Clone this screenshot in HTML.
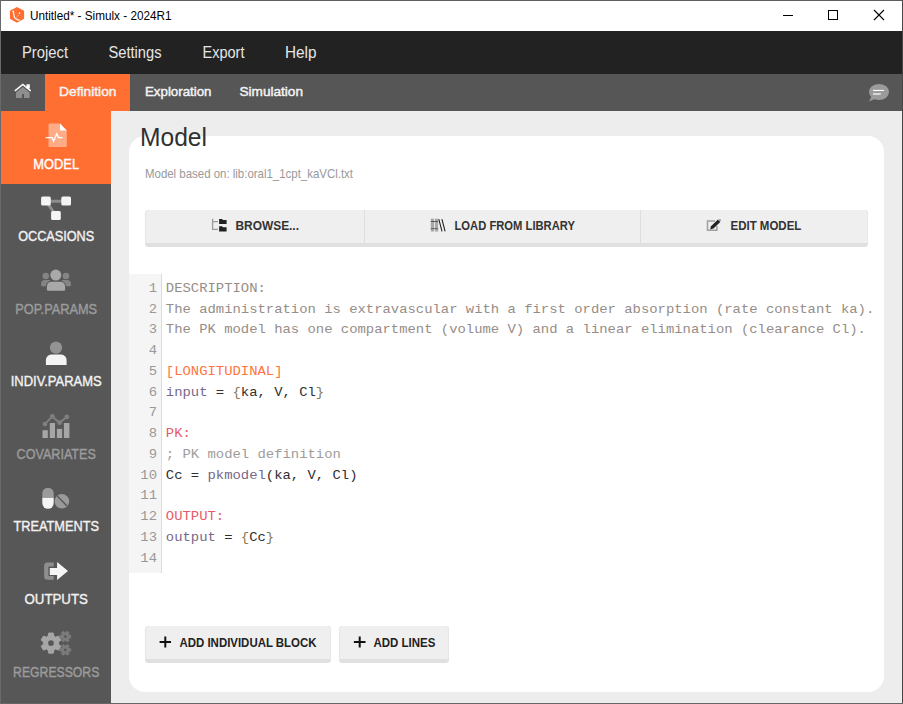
<!DOCTYPE html>
<html><head><meta charset="utf-8"><title>Simulx</title>
<style>
html,body{margin:0;padding:0;width:903px;height:704px;overflow:hidden;background:#5f5f5f;font-family:"Liberation Sans",sans-serif;}
.a{position:absolute;}
</style></head><body>
<div class="a" style="left:0;top:0;width:903px;height:1px;background:#5f5f5f;"></div>
<div class="a" style="left:0;top:0;width:1px;height:704px;background:#6a6a6a;"></div>
<div class="a" style="left:902px;top:0;width:1px;height:704px;background:#474747;"></div>
<div class="a" style="left:0;top:703px;width:903px;height:1px;background:#666;"></div>
<div class="a" style="left:1px;top:1px;width:901px;height:702px;background:#ededed;"></div>
<div class="a" style="left:1px;top:1px;width:901px;height:30px;background:#fff;"></div>
<div class="a" style="left:1px;top:31px;width:901px;height:43px;background:#222;"></div>
<div class="a" style="left:1px;top:74px;width:901px;height:37px;background:#565656;"></div>
<div class="a" style="left:45px;top:74px;width:85px;height:37px;background:#ff6f31;"></div>
<div class="a" style="left:1px;top:111px;width:110px;height:592px;background:#575757;"></div>
<div class="a" style="left:1px;top:111px;width:110px;height:72.5px;background:#ff6f31;"></div>
<div class="a" style="left:129px;top:136px;width:755px;height:556px;background:#fff;border-radius:16px;"></div>
<div class="a" style="left:129px;top:274px;width:32px;height:299px;background:#f5f5f5;border-right:1px solid #dcdcdc;"></div>
<div class="a" style="left:145px;top:210px;width:723px;height:37px;background:#e0e0e0;border-radius:3.5px;"></div>
<div class="a" style="left:145px;top:210px;width:723px;height:33px;background:#efefef;border-radius:3.5px 3.5px 0 0;box-shadow:inset 1px 0 0 #e6e6e6,inset -1px 0 0 #e6e6e6;"></div>
<div class="a" style="left:364px;top:210px;width:1px;height:33px;background:#dedede;"></div>
<div class="a" style="left:640px;top:210px;width:1px;height:33px;background:#dedede;"></div>
<div class="a" style="left:145px;top:626px;width:186px;height:37px;background:#e0e0e0;border-radius:3.5px;"></div>
<div class="a" style="left:145px;top:626px;width:186px;height:33px;background:#efefef;border-radius:3.5px 3.5px 0 0;box-shadow:inset 1px 0 0 #e6e6e6,inset -1px 0 0 #e6e6e6;"></div>
<div class="a" style="left:339px;top:626px;width:110px;height:37px;background:#e0e0e0;border-radius:3.5px;"></div>
<div class="a" style="left:339px;top:626px;width:110px;height:33px;background:#efefef;border-radius:3.5px 3.5px 0 0;box-shadow:inset 1px 0 0 #e6e6e6,inset -1px 0 0 #e6e6e6;"></div>
<svg class="a" style="left:0;top:0" width="903" height="704" viewBox="0 0 903 704">

<!-- title logo -->
<polygon points="16.9,7 24.1,10.8 24.1,18.8 16.9,22.8 9.9,18.8 9.9,10.8" fill="#ff6f31"/>
<path d="M12.3,11.8 L13.4,11.3 L14.2,16.8 Q15.5,19.8 19.8,20.3" stroke="#fff" stroke-width="1.1" fill="none"/>
<path d="M15.5,19 L20,13" stroke="#fff" stroke-width="0.7" stroke-dasharray="1,1" fill="none"/>
<circle cx="19.6" cy="13.1" r="0.8" fill="#fff"/>
<!-- window controls -->
<rect x="783" y="15" width="10" height="1" fill="#000"/>
<rect x="828.5" y="10.5" width="9" height="9" fill="none" stroke="#000" stroke-width="1"/>
<path d="M874,10 L884,20 M884,10 L874,20" stroke="#000" stroke-width="1.1"/>
<!-- home -->
<path d="M16,92.6 L22.8,86.9 L29.6,92.6 L29.6,98 L24,98 L24,93.9 L22,93.9 L22,98 L16,98 Z" fill="#8e8e8e"/>
<path d="M14.9,90.8 L22.8,84.5 L30.7,90.8" stroke="#fff" stroke-width="1.5" fill="none"/>
<rect x="26.5" y="84.3" width="3.3" height="4.2" fill="#fff"/>
<!-- chat bubble -->
<ellipse cx="879" cy="92" rx="10" ry="8" fill="#9b9b9b"/>
<path d="M871.5,96.5 L869,101.5 L876,98.5 Z" fill="#9b9b9b"/>
<rect x="873" y="89.9" width="11" height="1.1" fill="#fff"/>
<rect x="873" y="93.4" width="7.8" height="1.2" fill="#fff"/>
<!-- MODEL icon -->
<path d="M49.5,123.6 L60,123.6 L66.8,130.4 L66.8,146 Q66.8,147 65.8,147 L49.5,147 Q48.5,147 48.5,146 L48.5,124.6 Q48.5,123.6 49.5,123.6 Z" fill="#ffac86"/>
<path d="M60,123.6 L66.8,130.4 L60,130.4 Z" fill="#fff"/>
<path d="M45.6,137.6 L52.2,137.6 L53.6,141.2 L56.8,133.8 L58.6,137.6 L62.5,137.6" stroke="#fff" stroke-width="1.3" fill="none" stroke-linejoin="miter"/>
<!-- OCCASIONS icon -->
<path d="M46,201.2 L66,201.2 M46,201.2 L56,215.5" stroke="#8c8c8c" stroke-width="3" fill="none"/>
<rect x="41.1" y="196.4" width="9.7" height="9.2" rx="1.5" fill="#f4f4f4"/>
<rect x="61.3" y="196.4" width="9.7" height="9.2" rx="1.5" fill="#f4f4f4"/>
<rect x="51.1" y="211" width="9.7" height="8.9" rx="1.5" fill="#f4f4f4"/>
<!-- POP.PARAMS icon -->
<circle cx="45.8" cy="276" r="3.3" fill="#848484"/>
<circle cx="66" cy="276" r="3.3" fill="#848484"/>
<path d="M41,286 L41,284 Q41,280 45,280 L50,280 L50,286.3 L42.5,286.3 Q41,286.3 41,285 Z" fill="#848484"/>
<path d="M71,286 L71,284 Q71,280 67,280 L62,280 L62,286.3 L69.5,286.3 Q71,286.3 71,285 Z" fill="#848484"/>
<circle cx="55.8" cy="275.1" r="6.4" fill="#575757"/>
<circle cx="55.8" cy="275.1" r="5.5" fill="#a9a9a9"/>
<path d="M46,291.6 L46,286.5 Q46,281 51.5,281 L60,281 Q65.8,281 65.8,286.5 L65.8,291.6 Z" fill="#575757"/>
<path d="M46.9,289.6 L46.9,287 Q46.9,281.8 52,281.8 L59.9,281.8 Q65.1,281.8 65.1,287 L65.1,289.6 Q65.1,290.8 63.9,290.8 L48.1,290.8 Q46.9,290.8 46.9,289.6 Z" fill="#a9a9a9"/>
<!-- INDIV icon -->
<circle cx="56" cy="347.6" r="6.1" fill="#939393"/>
<path d="M45.9,364.9 L45.9,359.9 A5.3,5.3 0 0 1 51.2,354.6 L61.3,354.6 A5.3,5.3 0 0 1 66.6,359.9 L66.6,364.9 Z" fill="#f4f4f4"/>
<!-- COVARIATES icon -->
<rect x="42.5" y="430.2" width="5.3" height="7.8" fill="#a6a6a6"/>
<rect x="49.8" y="423" width="5.2" height="15" fill="#a6a6a6"/>
<rect x="56.9" y="428.9" width="5.2" height="9.1" fill="#a6a6a6"/>
<rect x="63.9" y="423" width="5.5" height="15" fill="#a6a6a6"/>
<path d="M45,424.1 L52.3,416.4 L59.6,422.7 L66.9,416.8" stroke="#7f7f7f" stroke-width="2" fill="none"/>
<circle cx="45" cy="424.1" r="2.4" fill="#7f7f7f"/>
<circle cx="52.3" cy="416.4" r="2.4" fill="#7f7f7f"/>
<circle cx="59.6" cy="422.7" r="2.4" fill="#7f7f7f"/>
<circle cx="66.9" cy="416.8" r="2.4" fill="#7f7f7f"/>
<!-- TREATMENTS icon -->
<path d="M42.3,497.7 L42.3,493.4 A5.7,5.7 0 0 1 53.7,493.4 L53.7,497.7 Z" fill="#9a9a9a"/>
<path d="M42.3,497.7 L42.3,503.1 A5.7,5.7 0 0 0 53.7,503.1 L53.7,497.7 Z" fill="#f4f4f4"/>
<circle cx="61.9" cy="501.3" r="7.3" fill="#9a9a9a"/>
<path d="M57.2,496 L67,506" stroke="#555" stroke-width="1.3"/>
<!-- OUTPUTS icon -->
<path d="M53.7,562.5 L47.5,562.5 Q44.1,562.5 44.1,566 L44.1,576.3 Q44.1,579.8 47.5,579.8 L53.7,579.8 L53.7,575.9 L48.4,575.9 L48.4,566.4 L53.7,566.4 Z" fill="#8e8e8e"/>
<path d="M49.8,568 L57.1,568 L57.1,562 L68,571 L57.1,580 L57.1,575 L49.8,575 Z" fill="#f4f4f4"/>
<!-- REGRESSORS icon -->


<polygon points="48.06,636.31 48.75,633.05 53.25,633.05 53.94,636.31 55.41,637.16 58.58,636.13 60.83,640.02 58.35,642.25 58.35,643.95 60.83,646.18 58.58,650.07 55.41,649.04 53.94,649.89 53.25,653.15 48.75,653.15 48.06,649.89 46.59,649.04 43.42,650.07 41.17,646.18 43.65,643.95 43.65,642.25 41.17,640.02 43.42,636.13 46.59,637.16" fill="#a6a6a6" stroke="#a6a6a6" stroke-width="1" stroke-linejoin="round"/><circle cx="51" cy="643.1" r="2.9" fill="#575757"/><polygon points="68.88,635.05 70.67,635.40 70.67,637.80 68.88,638.15 68.43,638.93 69.02,640.65 66.94,641.85 65.75,640.47 64.85,640.47 63.66,641.85 61.58,640.65 62.17,638.93 61.72,638.15 59.93,637.80 59.93,635.40 61.72,635.05 62.17,634.27 61.58,632.55 63.66,631.35 64.85,632.73 65.75,632.73 66.94,631.35 69.02,632.55 68.43,634.27" fill="#7b7b7b" stroke="#7b7b7b" stroke-width="1" stroke-linejoin="round"/><circle cx="65.3" cy="636.6" r="1.3" fill="#575757"/><polygon points="68.88,648.35 70.67,648.70 70.67,651.10 68.88,651.45 68.43,652.23 69.02,653.95 66.94,655.15 65.75,653.77 64.85,653.77 63.66,655.15 61.58,653.95 62.17,652.23 61.72,651.45 59.93,651.10 59.93,648.70 61.72,648.35 62.17,647.57 61.58,645.85 63.66,644.65 64.85,646.03 65.75,646.03 66.94,644.65 69.02,645.85 68.43,647.57" fill="#7b7b7b" stroke="#7b7b7b" stroke-width="1" stroke-linejoin="round"/><circle cx="65.3" cy="649.9" r="1.3" fill="#575757"/>

<!-- browse icon -->
<path d="M212.6,218.7 L212.6,229.4 L218,229.4 M212.6,221.6 L218,221.6" stroke="#9a9a9a" stroke-width="1.3" fill="none"/>
<path d="M219.1,219 L222,219 L223,220 L226.6,220 L226.6,224.1 L219.1,224.1 Z" fill="#222"/>
<path d="M219.1,226.2 L222,226.2 L223,227.2 L226.6,227.2 L226.6,231.5 L219.1,231.5 Z" fill="#222"/>
<!-- library icon -->
<rect x="430.8" y="218.7" width="3.2" height="12.8" fill="#a8a8a8"/>
<rect x="434.9" y="218.7" width="3.2" height="12.8" fill="#a8a8a8"/>
<rect x="430.8" y="221" width="7.3" height="0.9" fill="#4a4a4a"/>
<rect x="430.8" y="228.2" width="7.3" height="0.9" fill="#5a5a5a"/>
<path d="M438.8,219.2 L442,231.3 M441.9,219.2 L445.1,231.3" stroke="#222" stroke-width="1.1" fill="none"/>
<!-- edit icon -->
<path d="M715,220.9 L707.5,220.9 L707.5,230.2 L716.9,230.2 L716.9,226" stroke="#a0a0a0" stroke-width="1.5" fill="none"/>
<path d="M710.2,229.4 L711,226.2 L718,219.6 L720.3,222 L713.4,228.6 Z" fill="#222"/>
<circle cx="719.8" cy="220.1" r="1.2" fill="#a0a0a0"/>
<!-- plus icons -->
<path d="M159.6,642 L171,642 M165.3,636.4 L165.3,647.6" stroke="#111" stroke-width="2"/>
<path d="M353.9,642 L365.5,642 M359.7,636.4 L359.7,647.6" stroke="#111" stroke-width="2"/>

<text x="30" y="20" font-family="Liberation Sans" font-size="13" fill="#000" textLength="141.5" lengthAdjust="spacingAndGlyphs" >Untitled* - Simulx - 2024R1</text>
<text x="22" y="58" font-family="Liberation Sans" font-size="16" fill="#e6e6e6" textLength="46" lengthAdjust="spacingAndGlyphs" >Project</text>
<text x="108.5" y="58" font-family="Liberation Sans" font-size="16" fill="#e6e6e6" textLength="53" lengthAdjust="spacingAndGlyphs" >Settings</text>
<text x="202.5" y="58" font-family="Liberation Sans" font-size="16" fill="#e6e6e6" textLength="42" lengthAdjust="spacingAndGlyphs" >Export</text>
<text x="285" y="58" font-family="Liberation Sans" font-size="16" fill="#e6e6e6" textLength="31.5" lengthAdjust="spacingAndGlyphs" >Help</text>
<text x="59" y="95.7" font-family="Liberation Sans" font-size="13.5" fill="#f4f4f4" textLength="57.5" lengthAdjust="spacingAndGlyphs" stroke="#f4f4f4" stroke-width="0.45">Definition</text>
<text x="145" y="95.7" font-family="Liberation Sans" font-size="13.5" fill="#f4f4f4" textLength="66.5" lengthAdjust="spacingAndGlyphs" stroke="#f4f4f4" stroke-width="0.45">Exploration</text>
<text x="239.5" y="95.7" font-family="Liberation Sans" font-size="13.5" fill="#f4f4f4" textLength="63.5" lengthAdjust="spacingAndGlyphs" stroke="#f4f4f4" stroke-width="0.45">Simulation</text>
<text x="56.2" y="169" font-family="Liberation Sans" font-size="15" fill="#ffffff" text-anchor="middle" textLength="45.8" lengthAdjust="spacingAndGlyphs" stroke="#ffffff" stroke-width="0.4">MODEL</text>
<text x="56.2" y="241" font-family="Liberation Sans" font-size="15" fill="#f2f2f2" text-anchor="middle" textLength="76" lengthAdjust="spacingAndGlyphs" stroke="#f2f2f2" stroke-width="0.4">OCCASIONS</text>
<text x="56.2" y="314" font-family="Liberation Sans" font-size="15" fill="#9c9c9c" text-anchor="middle" textLength="81.8" lengthAdjust="spacingAndGlyphs" stroke="#9c9c9c" stroke-width="0.4">POP.PARAMS</text>
<text x="56.2" y="386" font-family="Liberation Sans" font-size="15" fill="#f2f2f2" text-anchor="middle" textLength="91" lengthAdjust="spacingAndGlyphs" stroke="#f2f2f2" stroke-width="0.4">INDIV.PARAMS</text>
<text x="56.2" y="459" font-family="Liberation Sans" font-size="15" fill="#9c9c9c" text-anchor="middle" textLength="79.2" lengthAdjust="spacingAndGlyphs" stroke="#9c9c9c" stroke-width="0.4">COVARIATES</text>
<text x="56.2" y="531" font-family="Liberation Sans" font-size="15" fill="#f2f2f2" text-anchor="middle" textLength="85.6" lengthAdjust="spacingAndGlyphs" stroke="#f2f2f2" stroke-width="0.4">TREATMENTS</text>
<text x="56.2" y="604" font-family="Liberation Sans" font-size="15" fill="#f2f2f2" text-anchor="middle" textLength="63.4" lengthAdjust="spacingAndGlyphs" stroke="#f2f2f2" stroke-width="0.4">OUTPUTS</text>
<text x="56.2" y="677" font-family="Liberation Sans" font-size="15" fill="#9c9c9c" text-anchor="middle" textLength="86.2" lengthAdjust="spacingAndGlyphs" stroke="#9c9c9c" stroke-width="0.4">REGRESSORS</text>
<text x="140" y="146" font-family="Liberation Sans" font-size="26" fill="#303030" textLength="67" lengthAdjust="spacingAndGlyphs" >Model</text>
<text x="145" y="178" font-family="Liberation Sans" font-size="12.8" fill="#999" textLength="208" lengthAdjust="spacingAndGlyphs" >Model based on: lib:oral1_1cpt_kaVCl.txt</text>
<text x="235.5" y="230" font-family="Liberation Sans" font-size="13.5" fill="#333" font-weight="bold" textLength="63.5" lengthAdjust="spacingAndGlyphs" >BROWSE...</text>
<text x="454.5" y="230" font-family="Liberation Sans" font-size="13.5" fill="#333" font-weight="bold" textLength="120.5" lengthAdjust="spacingAndGlyphs" >LOAD FROM LIBRARY</text>
<text x="730.5" y="230" font-family="Liberation Sans" font-size="13.5" fill="#333" font-weight="bold" textLength="70.8" lengthAdjust="spacingAndGlyphs" >EDIT MODEL</text>
<text x="179.5" y="647" font-family="Liberation Sans" font-size="13" fill="#222" font-weight="bold" textLength="137" lengthAdjust="spacingAndGlyphs" >ADD INDIVIDUAL BLOCK</text>
<text x="373.5" y="647" font-family="Liberation Sans" font-size="13" fill="#222" font-weight="bold" textLength="61.8" lengthAdjust="spacingAndGlyphs" >ADD LINES</text>
<g transform="translate(0 291.8) scale(1 0.87) translate(0 -291.8)"><text x="157" y="291.8" font-family="Liberation Mono" font-size="13.85" fill="#999999" text-anchor="end" textLength="8.335" lengthAdjust="spacingAndGlyphs" >1</text></g>
<g transform="translate(0 291.8) scale(1 0.87) translate(0 -291.8)"><text x="165.8" y="291.8" font-family="Liberation Mono" font-size="13.85" fill="#968d88" textLength="100.02" lengthAdjust="spacingAndGlyphs" xml:space="preserve">DESCRIPTION:</text></g>
<g transform="translate(0 312.56) scale(1 0.87) translate(0 -312.56)"><text x="157" y="312.56" font-family="Liberation Mono" font-size="13.85" fill="#999999" text-anchor="end" textLength="8.335" lengthAdjust="spacingAndGlyphs" >2</text></g>
<g transform="translate(0 312.56) scale(1 0.87) translate(0 -312.56)"><text x="165.8" y="312.56" font-family="Liberation Mono" font-size="13.85" fill="#968d88" textLength="708.48" lengthAdjust="spacingAndGlyphs" xml:space="preserve">The administration is extravascular with a first order absorption (rate constant ka).</text></g>
<g transform="translate(0 333.32) scale(1 0.87) translate(0 -333.32)"><text x="157" y="333.32" font-family="Liberation Mono" font-size="13.85" fill="#999999" text-anchor="end" textLength="8.335" lengthAdjust="spacingAndGlyphs" >3</text></g>
<g transform="translate(0 333.32) scale(1 0.87) translate(0 -333.32)"><text x="165.8" y="333.32" font-family="Liberation Mono" font-size="13.85" fill="#968d88" textLength="700.14" lengthAdjust="spacingAndGlyphs" xml:space="preserve">The PK model has one compartment (volume V) and a linear elimination (clearance Cl).</text></g>
<g transform="translate(0 354.08) scale(1 0.87) translate(0 -354.08)"><text x="157" y="354.08" font-family="Liberation Mono" font-size="13.85" fill="#999999" text-anchor="end" textLength="8.335" lengthAdjust="spacingAndGlyphs" >4</text></g>
<g transform="translate(0 374.84) scale(1 0.87) translate(0 -374.84)"><text x="157" y="374.84" font-family="Liberation Mono" font-size="13.85" fill="#999999" text-anchor="end" textLength="8.335" lengthAdjust="spacingAndGlyphs" >5</text></g>
<g transform="translate(0 374.84) scale(1 0.87) translate(0 -374.84)"><text x="165.8" y="374.84" font-family="Liberation Mono" font-size="13.85" fill="#ff7440" textLength="116.69" lengthAdjust="spacingAndGlyphs" xml:space="preserve">[LONGITUDINAL]</text></g>
<g transform="translate(0 395.6) scale(1 0.87) translate(0 -395.6)"><text x="157" y="395.6" font-family="Liberation Mono" font-size="13.85" fill="#999999" text-anchor="end" textLength="8.335" lengthAdjust="spacingAndGlyphs" >6</text></g>
<g transform="translate(0 395.6) scale(1 0.87) translate(0 -395.6)"><text x="165.8" y="395.6" font-family="Liberation Mono" font-size="13.85" fill="#76688a" textLength="41.68" lengthAdjust="spacingAndGlyphs" xml:space="preserve">input</text></g>
<g transform="translate(0 395.6) scale(1 0.87) translate(0 -395.6)"><text x="207.48" y="395.6" font-family="Liberation Mono" font-size="13.85" fill="#2e2e2e" textLength="25.01" lengthAdjust="spacingAndGlyphs" xml:space="preserve"> = </text></g>
<g transform="translate(0 395.6) scale(1 0.87) translate(0 -395.6)"><text x="232.48" y="395.6" font-family="Liberation Mono" font-size="13.85" fill="#857a55" textLength="8.34" lengthAdjust="spacingAndGlyphs" xml:space="preserve">{</text></g>
<g transform="translate(0 395.6) scale(1 0.87) translate(0 -395.6)"><text x="240.82" y="395.6" font-family="Liberation Mono" font-size="13.85" fill="#2e2e2e" textLength="75.02" lengthAdjust="spacingAndGlyphs" xml:space="preserve">ka, V, Cl</text></g>
<g transform="translate(0 395.6) scale(1 0.87) translate(0 -395.6)"><text x="315.83" y="395.6" font-family="Liberation Mono" font-size="13.85" fill="#857a55" textLength="8.34" lengthAdjust="spacingAndGlyphs" xml:space="preserve">}</text></g>
<g transform="translate(0 416.36) scale(1 0.87) translate(0 -416.36)"><text x="157" y="416.36" font-family="Liberation Mono" font-size="13.85" fill="#999999" text-anchor="end" textLength="8.335" lengthAdjust="spacingAndGlyphs" >7</text></g>
<g transform="translate(0 437.12) scale(1 0.87) translate(0 -437.12)"><text x="157" y="437.12" font-family="Liberation Mono" font-size="13.85" fill="#999999" text-anchor="end" textLength="8.335" lengthAdjust="spacingAndGlyphs" >8</text></g>
<g transform="translate(0 437.12) scale(1 0.87) translate(0 -437.12)"><text x="165.8" y="437.12" font-family="Liberation Mono" font-size="13.85" fill="#e95a68" textLength="25.01" lengthAdjust="spacingAndGlyphs" xml:space="preserve">PK:</text></g>
<g transform="translate(0 457.88) scale(1 0.87) translate(0 -457.88)"><text x="157" y="457.88" font-family="Liberation Mono" font-size="13.85" fill="#999999" text-anchor="end" textLength="8.335" lengthAdjust="spacingAndGlyphs" >9</text></g>
<g transform="translate(0 457.88) scale(1 0.87) translate(0 -457.88)"><text x="165.8" y="457.88" font-family="Liberation Mono" font-size="13.85" fill="#9c9c9c" textLength="175.04" lengthAdjust="spacingAndGlyphs" xml:space="preserve">; PK model definition</text></g>
<g transform="translate(0 478.64) scale(1 0.87) translate(0 -478.64)"><text x="157" y="478.64" font-family="Liberation Mono" font-size="13.85" fill="#999999" text-anchor="end" textLength="16.67" lengthAdjust="spacingAndGlyphs" >10</text></g>
<g transform="translate(0 478.64) scale(1 0.87) translate(0 -478.64)"><text x="165.8" y="478.64" font-family="Liberation Mono" font-size="13.85" fill="#2e2e2e" textLength="41.68" lengthAdjust="spacingAndGlyphs" xml:space="preserve">Cc = </text></g>
<g transform="translate(0 478.64) scale(1 0.87) translate(0 -478.64)"><text x="207.48" y="478.64" font-family="Liberation Mono" font-size="13.85" fill="#76688a" textLength="58.35" lengthAdjust="spacingAndGlyphs" xml:space="preserve">pkmodel</text></g>
<g transform="translate(0 478.64) scale(1 0.87) translate(0 -478.64)"><text x="265.82" y="478.64" font-family="Liberation Mono" font-size="13.85" fill="#2e2e2e" textLength="91.69" lengthAdjust="spacingAndGlyphs" xml:space="preserve">(ka, V, Cl)</text></g>
<g transform="translate(0 499.4) scale(1 0.87) translate(0 -499.4)"><text x="157" y="499.4" font-family="Liberation Mono" font-size="13.85" fill="#999999" text-anchor="end" textLength="16.67" lengthAdjust="spacingAndGlyphs" >11</text></g>
<g transform="translate(0 520.16) scale(1 0.87) translate(0 -520.16)"><text x="157" y="520.16" font-family="Liberation Mono" font-size="13.85" fill="#999999" text-anchor="end" textLength="16.67" lengthAdjust="spacingAndGlyphs" >12</text></g>
<g transform="translate(0 520.16) scale(1 0.87) translate(0 -520.16)"><text x="165.8" y="520.16" font-family="Liberation Mono" font-size="13.85" fill="#e95a68" textLength="58.35" lengthAdjust="spacingAndGlyphs" xml:space="preserve">OUTPUT:</text></g>
<g transform="translate(0 540.92) scale(1 0.87) translate(0 -540.92)"><text x="157" y="540.92" font-family="Liberation Mono" font-size="13.85" fill="#999999" text-anchor="end" textLength="16.67" lengthAdjust="spacingAndGlyphs" >13</text></g>
<g transform="translate(0 540.92) scale(1 0.87) translate(0 -540.92)"><text x="165.8" y="540.92" font-family="Liberation Mono" font-size="13.85" fill="#76688a" textLength="50.01" lengthAdjust="spacingAndGlyphs" xml:space="preserve">output</text></g>
<g transform="translate(0 540.92) scale(1 0.87) translate(0 -540.92)"><text x="215.81" y="540.92" font-family="Liberation Mono" font-size="13.85" fill="#2e2e2e" textLength="25.01" lengthAdjust="spacingAndGlyphs" xml:space="preserve"> = </text></g>
<g transform="translate(0 540.92) scale(1 0.87) translate(0 -540.92)"><text x="240.82" y="540.92" font-family="Liberation Mono" font-size="13.85" fill="#857a55" textLength="8.34" lengthAdjust="spacingAndGlyphs" xml:space="preserve">{</text></g>
<g transform="translate(0 540.92) scale(1 0.87) translate(0 -540.92)"><text x="249.15" y="540.92" font-family="Liberation Mono" font-size="13.85" fill="#2e2e2e" textLength="16.67" lengthAdjust="spacingAndGlyphs" xml:space="preserve">Cc</text></g>
<g transform="translate(0 540.92) scale(1 0.87) translate(0 -540.92)"><text x="265.82" y="540.92" font-family="Liberation Mono" font-size="13.85" fill="#857a55" textLength="8.34" lengthAdjust="spacingAndGlyphs" xml:space="preserve">}</text></g>
<g transform="translate(0 561.68) scale(1 0.87) translate(0 -561.68)"><text x="157" y="561.68" font-family="Liberation Mono" font-size="13.85" fill="#999999" text-anchor="end" textLength="16.67" lengthAdjust="spacingAndGlyphs" >14</text></g>
</svg>
</body></html>
